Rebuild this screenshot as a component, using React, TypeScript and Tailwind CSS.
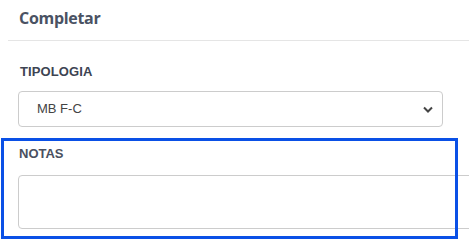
import React from "react";

export default function App() {
  return (
    <div className="relative w-[469px] h-[241px] overflow-hidden bg-white" style={{ fontFamily: '"Liberation Sans", Arial, sans-serif' }}>
      <div className="h-[40px] pl-[19px] pt-[6px]">
        <h1 className="text-[16px] leading-[24px] font-bold text-[#4a5263] tracking-[-0.3px]" style={{ fontFamily: '"Open Sans", sans-serif' }}>
          Completar
        </h1>
      </div>
      <div className="ml-[8px] h-px bg-[#e5e5e5]" />
      <div className="pl-[18px] pt-[24px]">
        <label className="block pl-[2px] text-[13px] leading-[14px] font-bold text-[#3d4452] tracking-[0.1px]">TIPOLOGIA</label>
        <div className="mt-[12px] w-[425px] h-[36px] rounded-[4px] border border-[#cccccc] flex items-center justify-between pl-[18px] pr-[9px]">
          <span className="text-[13px] text-[#444444]">MB F-C</span>
          <svg width="10" height="7" viewBox="0 0 10 7" className="mt-[1px]">
            <path d="M1 1.5 L5 5.5 L9 1.5" fill="none" stroke="#444" strokeWidth="2" />
          </svg>
        </div>
        <label className="block mt-[20px] pl-[1px] text-[13px] leading-[14px] font-bold text-[#4a5060]">NOTAS</label>
        <div className="mt-[14px] w-[470px] h-[54px] rounded-[4px] border border-[#cccccc] bg-white" />
      </div>
      <div className="absolute left-[1px] top-[138px] w-[457px] h-[101px] border-[3px] border-[#0a50e6] pointer-events-none" />
    </div>
  );
}
